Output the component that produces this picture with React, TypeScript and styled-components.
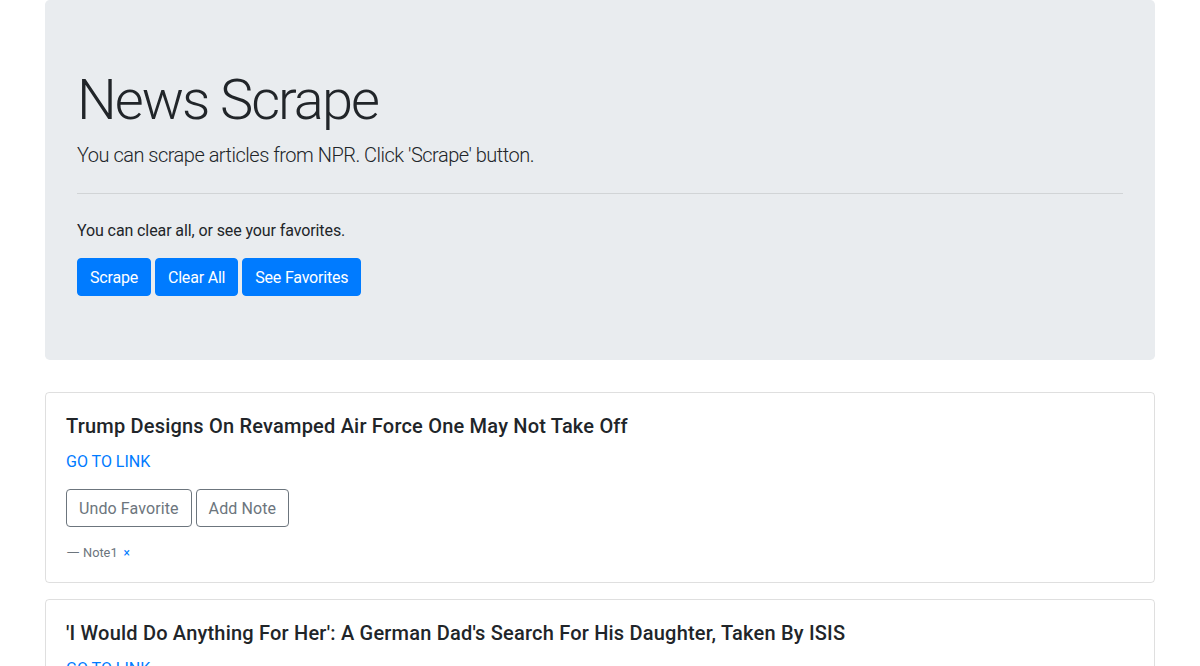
import React from "react";
import styled, { createGlobalStyle } from "styled-components";

const GlobalStyle = createGlobalStyle`
  *, *::before, *::after { box-sizing: border-box; }
  body {
    margin: 0;
    font-family: Roboto, "Liberation Sans", sans-serif;
    font-size: 16px;
    line-height: 1.5;
    color: #212529;
    background: #fff;
  }
`;

const Container = styled.div`
  max-width: 1140px;
  padding: 0 15px;
  margin: 0 auto;
`;

const Jumbotron = styled.header`
  background: #e9ecef;
  border-radius: 4.8px;
  padding: 64px 32px;
  margin-bottom: 32px;
`;

const Display = styled.h1`
  font-size: 56px;
  font-weight: 300;
  line-height: 1.2;
  letter-spacing: -2px;
  padding-top: 3px;
  margin: 0 0 5px;
`;

const Lead = styled.p`
  font-size: 20px;
  font-weight: 300;
  letter-spacing: -0.5px;
  padding-top: 1px;
  margin: 0 0 15px;
`;

const Rule = styled.hr`
  border: 0;
  border-top: 1px solid rgba(0, 0, 0, 0.1);
  margin: 23px 0 24px;
`;

const Text = styled.p`
  letter-spacing: -0.1px;
  padding-top: 1px;
  margin: 0 0 15px;
`;

const ButtonRow = styled.div`
  display: flex;
  gap: 4px;
`;

const Button = styled.button<{ $variant: "primary" | "outline" }>`
  font-family: inherit;
  font-size: 16px;
  line-height: 1.5;
  padding: 7px 12px 5px;
  border-radius: 4px;
  cursor: pointer;
  letter-spacing: ${(p) => (p.$variant === "primary" ? "-0.2px" : "0.1px")};
  border: 1px solid ${(p) => (p.$variant === "primary" ? "#007bff" : "#6c757d")};
  background: ${(p) => (p.$variant === "primary" ? "#007bff" : "transparent")};
  color: ${(p) => (p.$variant === "primary" ? "#fff" : "#6c757d")};
`;

const Card = styled.article`
  border: 1px solid rgba(0, 0, 0, 0.125);
  border-radius: 4px;
  padding: 20px;
  margin-bottom: 16px;
`;

const CardTitle = styled.h5`
  font-size: 20px;
  font-weight: 500;
  line-height: 1.2;
  letter-spacing: 0.2px;
  padding-top: 1px;
  margin: 0 0 11px;
`;

const CardLink = styled.a`
  display: block;
  color: #007bff;
  text-decoration: none;
  padding-top: 1px;
  margin-bottom: 15px;
`;

const NoteList = styled.div`
  margin-top: 15px;
`;

const Note = styled.footer`
  font-size: 12.8px;
  color: #6c757d;
  padding-top: 1px;
`;

const Dash = styled.span`
  display: inline-block;
  transform: scaleX(1.4);
  transform-origin: left center;
  margin-right: 7px;
`;

const RemoveNote = styled.a`
  color: #007bff;
  text-decoration: none;
  margin-left: 6px;
  font-size: 12px;
`;

type Article = { title: string; notes: string[] };

const articles: Article[] = [
  { title: "Trump Designs On Revamped Air Force One May Not Take Off", notes: ["Note1"] },
  {
    title:
      "'I Would Do Anything For Her': A German Dad's Search For His Daughter, Taken By ISIS",
    notes: [],
  },
];

export default function App() {
  return (
    <>
      <GlobalStyle />
      <Container>
        <Jumbotron>
          <Display>News Scrape</Display>
          <Lead>You can scrape articles from NPR. Click 'Scrape' button.</Lead>
          <Rule />
          <Text>You can clear all, or see your favorites.</Text>
          <ButtonRow>
            <Button $variant="primary">Scrape</Button>
            <Button $variant="primary">Clear All</Button>
            <Button $variant="primary">See Favorites</Button>
          </ButtonRow>
        </Jumbotron>
        {articles.map((a) => (
          <Card key={a.title}>
            <CardTitle>{a.title}</CardTitle>
            <CardLink href="#">GO TO LINK</CardLink>
            <ButtonRow>
              <Button $variant="outline">Undo Favorite</Button>
              <Button $variant="outline">Add Note</Button>
            </ButtonRow>
            {a.notes.length > 0 && (
              <NoteList>
                {a.notes.map((n) => (
                  <Note key={n}>
                    <Dash>—</Dash>
                    {n}
                    <RemoveNote href="#">×</RemoveNote>
                  </Note>
                ))}
              </NoteList>
            )}
          </Card>
        ))}
      </Container>
    </>
  );
}
